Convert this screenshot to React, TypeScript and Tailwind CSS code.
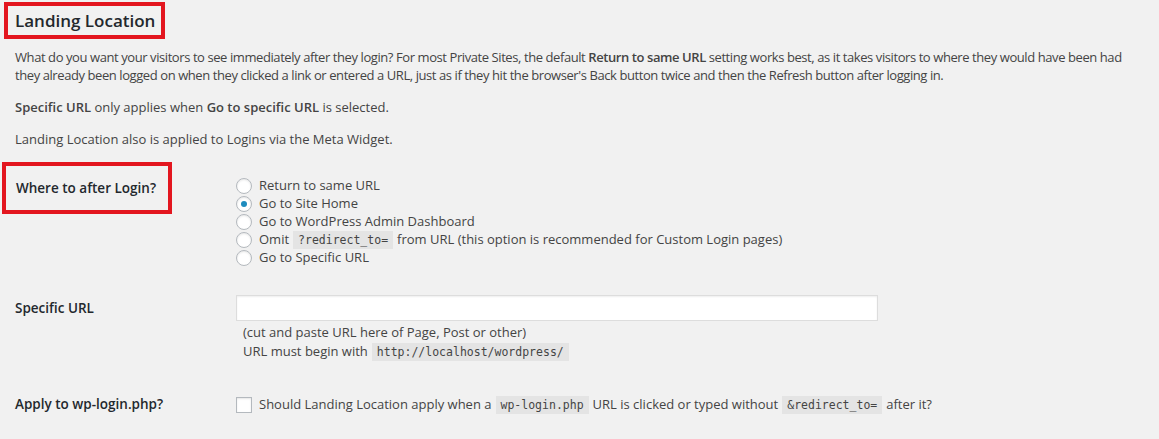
const Code = ({ children }: { children: string }) => (
  <code className="mx-[4px] bg-[#e4e4e4] px-[5px] pt-[2px] pb-[2px] font-['DejaVu_Sans_Mono',monospace] text-[11.5px] text-[#444]">
    {children}
  </code>
);

const Radio = ({ checked = false }: { checked?: boolean }) => (
  <span className="mr-[7px] flex h-4 w-4 shrink-0 items-center justify-center rounded-full border border-[#b4b9be] bg-white shadow-[inset_0_1px_2px_rgba(0,0,0,0.1)]">
    {checked && <span className="h-[6px] w-[6px] rounded-full bg-[#1e8cbe]" />}
  </span>
);

const options = [
  { label: 'Return to same URL' },
  { label: 'Go to Site Home', checked: true },
  { label: 'Go to WordPress Admin Dashboard' },
  { omit: true },
  { label: 'Go to Specific URL' },
];

export default function App() {
  return (
    <div className="min-h-[439px] bg-[#f1f1f1] px-[15px] pt-[2px] font-['Open_Sans',sans-serif] text-[13px] text-[#444]">
      <h2 className="-ml-[11px] inline-block border-4 border-[#e3161f] pr-[6px] pl-[7px] text-[17px] font-semibold leading-[29px] text-[#23282d]">
        Landing Location
      </h2>

      <p className="mt-[9px] leading-[18px] tracking-[-0.42px]">
        What do you want your visitors to see immediately after they login? For most Private Sites, the default{' '}
        <strong className="font-semibold">Return to same URL</strong> setting works best, as it takes visitors to where
        they would have been had they already been logged on when they clicked a link or entered a URL, just as if they
        hit the browser's Back button twice and then the Refresh button after logging in.
      </p>
      <p className="mt-[14px] leading-[18px]">
        <strong className="font-semibold">Specific URL</strong> only applies when{' '}
        <strong className="font-semibold">Go to specific URL</strong> is selected.
      </p>
      <p className="mt-[14px] leading-[18px]">Landing Location also is applied to Logins via the Meta Widget.</p>

      <div className="mt-[14px] grid grid-cols-[221px_1fr]">
        <div>
          <div className="-ml-[13px] flex h-[52px] w-[170px] items-center border-4 border-[#e3161f] pl-[10px] text-[13.5px] font-semibold text-[#23282d]">
            Where to after Login?
          </div>
        </div>
        <div className="pt-[15px]">
          {options.map((o, i) => (
            <div className="flex h-[18px] items-center" key={i}>
              <Radio checked={o.checked} />
              {o.omit ? (
                <span>
                  Omit<Code>?redirect_to=</Code>from URL (this option is recommended for Custom Login pages)
                </span>
              ) : (
                <span>{o.label}</span>
              )}
            </div>
          ))}
        </div>
      </div>

      <div className="mt-[28px] grid grid-cols-[221px_1fr]">
        <div className="text-[13.5px] font-semibold leading-[26px] text-[#23282d]">Specific URL</div>
        <div>
          <div className="h-[26px] w-[642px] border border-[#ddd] bg-white shadow-[inset_0_1px_2px_rgba(0,0,0,0.07)]" />
          <div className="mt-[2px] pl-[7px] leading-[19px]">
            <div>(cut and paste URL here of Page, Post or other)</div>
            <div>
              URL must begin with<Code>http://localhost/wordpress/</Code>
            </div>
          </div>
        </div>
      </div>

      <div className="mt-[33px] grid grid-cols-[221px_1fr]">
        <div className="text-[13.5px] font-semibold leading-[18px] text-[#23282d]">Apply to wp-login.php?</div>
        <div className="flex items-center">
          <span className="mr-[7px] h-4 w-4 shrink-0 border border-[#b4b9be] bg-white shadow-[inset_0_1px_2px_rgba(0,0,0,0.1)]" />
          <span className="leading-[18px]">
            Should Landing Location apply when a<Code>wp-login.php</Code>URL is clicked or typed without
            <Code>&redirect_to=</Code>after it?
          </span>
        </div>
      </div>
    </div>
  );
}
